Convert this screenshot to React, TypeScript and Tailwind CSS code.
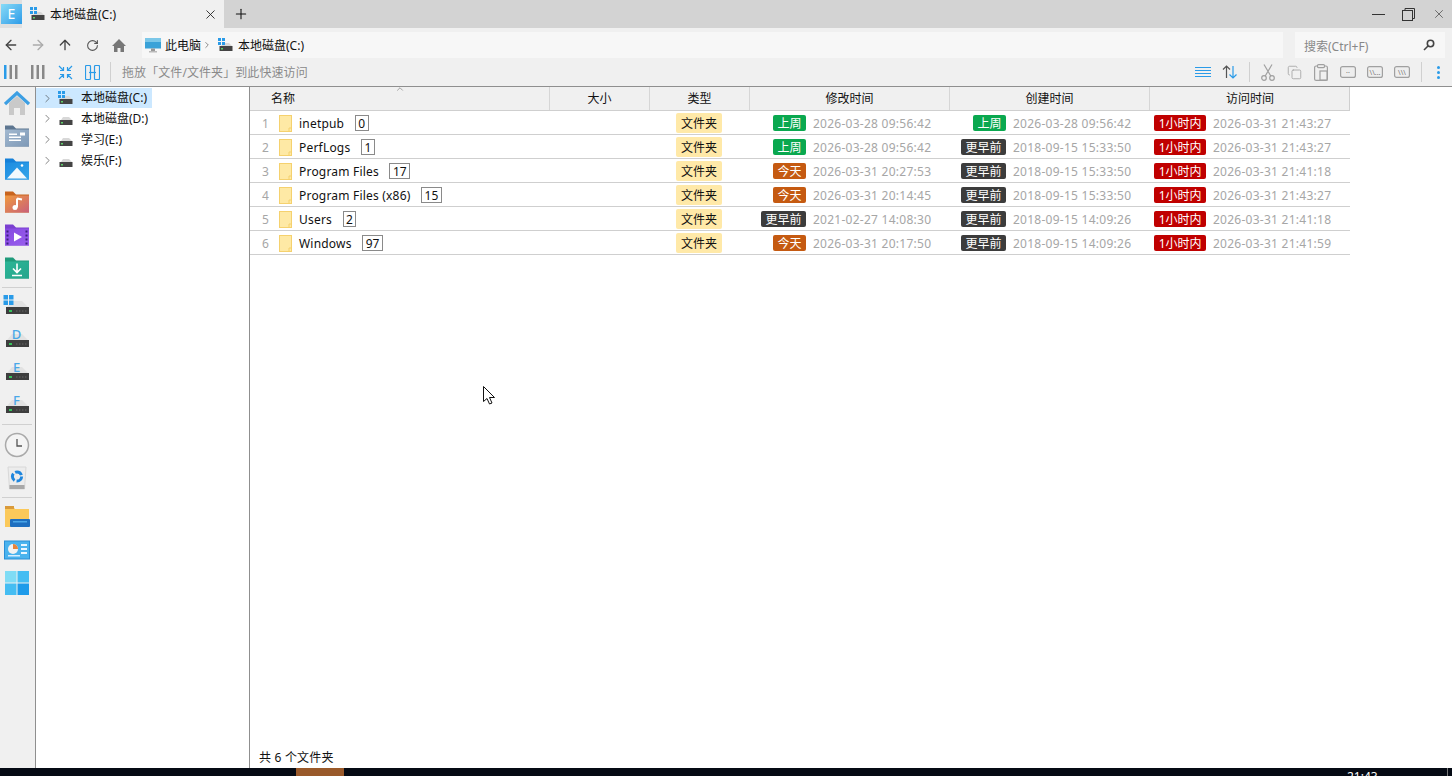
import { ArrowLeft, ArrowRight, ArrowUp, ChevronRight, ChevronUp, Copy, Plus, RotateCw, X } from 'lucide-react';

const FONT = 'font-["Noto_Sans","Noto_Sans_CJK_SC",sans-serif]';

type Tag = 'week' | 'today' | 'old' | 'hour';

const tagStyle: Record<Tag, { label: string; color: string }> = {
    week: { label: '上周', color: 'bg-[#0aa84f]' },
    today: { label: '今天', color: 'bg-[#c55a11]' },
    old: { label: '更早前', color: 'bg-[#3c3c3c]' },
    hour: { label: '1小时内', color: 'bg-[#c00000]' },
};

const rows: { name: string; count: string; cells: [Tag, string][] }[] = [
    { name: 'inetpub', count: '0', cells: [['week', '2026-03-28 09:56:42'], ['week', '2026-03-28 09:56:42'], ['hour', '2026-03-31 21:43:27']] },
    { name: 'PerfLogs', count: '1', cells: [['week', '2026-03-28 09:56:42'], ['old', '2018-09-15 15:33:50'], ['hour', '2026-03-31 21:43:27']] },
    { name: 'Program Files', count: '17', cells: [['today', '2026-03-31 20:27:53'], ['old', '2018-09-15 15:33:50'], ['hour', '2026-03-31 21:41:18']] },
    { name: 'Program Files (x86)', count: '15', cells: [['today', '2026-03-31 20:14:45'], ['old', '2018-09-15 15:33:50'], ['hour', '2026-03-31 21:43:27']] },
    { name: 'Users', count: '2', cells: [['old', '2021-02-27 14:08:30'], ['old', '2018-09-15 14:09:26'], ['hour', '2026-03-31 21:41:18']] },
    { name: 'Windows', count: '97', cells: [['today', '2026-03-31 20:17:50'], ['old', '2018-09-15 14:09:26'], ['hour', '2026-03-31 21:41:59']] },
];

const columns = ['名称', '大小', '类型', '修改时间', '创建时间', '访问时间'];
const tree = ['本地磁盘(C:)', '本地磁盘(D:)', '学习(E:)', '娱乐(F:)'];

const WinLogo = ({ x, y, s }: { x: number; y: number; s: number }) => (
    <g fill="#2a9be8">
        <rect x={x} y={y} width={s} height={s} />
        <rect x={x + s + 1} y={y} width={s} height={s} />
        <rect x={x} y={y + s + 1} width={s} height={s} />
        <rect x={x + s + 1} y={y + s + 1} width={s} height={s} />
    </g>
);

const SmallDrive = ({ win }: { win?: boolean }) => (
    <svg width="16" height="14" viewBox="0 0 16 14">
        <path d="M3 8 L5 5 H11 L14 8 Z" fill="#d8d8d8" />
        <rect x="1.5" y="8" width="13" height="5" fill="#444" />
        <rect x="3" y="10" width="2" height="1.5" fill="#5fd06a" />
        {win && <WinLogo x={0} y={0} s={3} />}
    </svg>
);

const RailDrive = ({ letter, win }: { letter?: string; win?: boolean }) => (
    <svg width="28" height="28" viewBox="0 0 28 28">
        <path d="M4 15 L9 9 H19 L25 15 Z" fill="#e2e2e2" />
        <rect x="3" y="15" width="23" height="7" fill="#3e3e3e" />
        <rect x="6" y="18" width="3" height="2" fill="#35c25a" />
        {[13, 16, 19, 22].map((x) => <rect key={x} x={x} y="18.5" width="1.5" height="1" fill="#666" />)}
        {win && <WinLogo x={0.5} y={3} s={4.5} />}
        {letter && <text x="13.5" y="14" textAnchor="middle" fontSize="13" fontWeight="500" fill="#4aa8e8" fontFamily="Noto Sans">{letter}</text>}
    </svg>
);

const RailFolder = ({ id, tab, from, to, children }: { id: string; tab: string; from: string; to: string; children?: React.ReactNode }) => (
    <svg width="26" height="24" viewBox="0 1.5 26 24">
        <defs>
            <linearGradient id={id} x1="0" y1="0" x2="1" y2="1">
                <stop offset="0" stopColor={from} />
                <stop offset="1" stopColor={to} />
            </linearGradient>
        </defs>
        <path d="M1 2 H9 L12 5 H25 V23 H1 Z" fill={tab} />
        <rect x="1" y="6" width="24" height="17" fill={`url(#${id})`} />
        {children}
    </svg>
);

const HomeBig = () => (
    <svg width="26" height="26" viewBox="0 0 26 26">
        <path d="M5 12 V24 H10 V17 H16 V24 H21 V12 L13 5 Z" fill="#c9c9c9" />
        <path d="M1 13 L13 2 L25 13" fill="none" stroke="#3d9fe3" strokeWidth="3.2" />
    </svg>
);

const ClockIcon = () => (
    <svg width="26" height="26" viewBox="0 0 26 26">
        <circle cx="13" cy="13" r="11.5" fill="#f4f4f4" stroke="#a9a9a9" strokeWidth="1.5" />
        <path d="M13 7 V14 H18" fill="none" stroke="#555" strokeWidth="1.3" />
    </svg>
);

const RecycleIcon = () => (
    <svg width="22" height="26" viewBox="0 0 22 26">
        <path d="M2 2 H20 L18.5 24 H3.5 Z" fill="#ececec" stroke="#d8d8d8" />
        <rect x="3.5" y="20" width="15" height="4" fill="#a8a8a8" />
        <circle cx="11" cy="11.5" r="4.6" fill="none" stroke="#1f86dd" strokeWidth="3" strokeDasharray="7.5 2.1" />
    </svg>
);

const ExplorerIcon = () => (
    <svg width="26" height="24" viewBox="0 0 26 24">
        <path d="M1 1 H9 L11 4 H25 V22 H1 Z" fill="#fbc95a" />
        <rect x="1" y="1" width="9" height="3" fill="#d99a3a" />
        <rect x="6" y="14" width="20" height="8" rx="1" fill="#1e6fc0" />
        <rect x="9" y="16" width="14" height="1.5" fill="#4aa6e8" />
    </svg>
);

const PanelIcon = () => (
    <svg width="26" height="20" viewBox="0 0 26 20">
        <rect x="0.5" y="1" width="25" height="18" fill="#4ab3ee" stroke="#2a8fd6" />
        <circle cx="9" cy="9" r="5" fill="#f2f2f2" />
        <path d="M9 9 V4 A5 5 0 0 1 14 9 Z" fill="#e8843a" />
        <rect x="17" y="4" width="6" height="2" fill="#eaf6ff" />
        <rect x="17" y="8" width="6" height="2" fill="#eaf6ff" />
        <rect x="17" y="12" width="6" height="2" fill="#eaf6ff" />
        <rect x="4" y="15" width="12" height="1.5" fill="#d5eeff" />
    </svg>
);

const WindowsIcon = () => (
    <svg width="24" height="24" viewBox="0 0 24 24">
        <rect x="0" y="0" width="11.5" height="11.5" fill="#7fdcf5" />
        <rect x="12.5" y="0" width="11.5" height="11.5" fill="#45bdf2" />
        <rect x="0" y="12.5" width="11.5" height="11.5" fill="#45bdf2" />
        <rect x="12.5" y="12.5" width="11.5" height="11.5" fill="#1e9bea" />
    </svg>
);

const railTop = [
    <HomeBig />,
    <RailFolder id="f-docs" tab="#5d7690" from="#a3b9d0" to="#7d98b6"><rect x="5" y="10" width="8" height="1.5" fill="#fff" /><rect x="5" y="13" width="12" height="1.5" fill="#fff" /><rect x="5" y="16" width="12" height="1.5" fill="#fff" /><rect x="16" y="9" width="5" height="3" fill="#fff" /></RailFolder>,
    <RailFolder id="f-pics" tab="#1580d8" from="#1c8be0" to="#35a5ea"><path d="M3 22 L13 11 L23 22 Z" fill="#f2f8fd" /><circle cx="18" cy="9" r="1.3" fill="#fff" /></RailFolder>,
    <RailFolder id="f-music" tab="#c8641e" from="#f09a3e" to="#c9607a"><path d="M13 9 V18 M13 9 L18 10" stroke="#fff" strokeWidth="2" fill="none" /><circle cx="11" cy="18" r="2.5" fill="#fff" /></RailFolder>,
    <RailFolder id="f-video" tab="#7a3fd0" from="#8548e0" to="#9a60ee"><path d="M10 10 L18 14.5 L10 19 Z" fill="#fff" />{[8, 12, 16, 20].map((y) => <rect key={y} x="2.5" y={y} width="2" height="2" fill="#3d1f80" />)}{[8, 12, 16, 20].map((y) => <rect key={y} x="21.5" y={y} width="2" height="2" fill="#3d1f80" />)}</RailFolder>,
    <RailFolder id="f-down" tab="#1f9a7a" from="#2bb596" to="#25a58c"><path d="M13 8 V17 M9 13 L13 17 L17 13 M8 20 H18" stroke="#fff" strokeWidth="1.6" fill="none" /></RailFolder>,
];

const railBottom = [<ClockIcon />, <RecycleIcon />];
const railApps = [<ExplorerIcon />, <PanelIcon />, <WindowsIcon />];

const RailItem = ({ children }: { children: React.ReactNode }) => (
    <div className="h-[33px] flex items-center justify-center">{children}</div>
);

const RailSep = ({ className }: { className: string }) => (
    <div className={`${className} flex items-center px-[2px]`}><div className="h-px w-full bg-[#d0d0d0]" /></div>
);

const Bars = ({ color }: { color: string }) => (
    <svg width="14" height="14" viewBox="0 0 14 14" fill="#888">
        <rect x="0" y="0" width="2.5" height="14" fill={color} /><rect x="5.5" y="0" width="2.5" height="14" /><rect x="11" y="0" width="2.5" height="14" />
    </svg>
);

const Collapse = () => (
    <svg width="15" height="15" viewBox="0 0 15 15" fill="none" stroke="#2a9be8" strokeWidth="1.2">
        <path d="M1 1 L5.5 5.5 M5.5 2 V5.5 H2 M14 1 L9.5 5.5 M9.5 2 V5.5 H13 M1 14 L5.5 9.5 M5.5 13 V9.5 H2 M14 14 L9.5 9.5 M9.5 13 V9.5 H13" />
    </svg>
);

const Expand = () => (
    <svg width="15" height="15" viewBox="0 0 15 15" fill="none" stroke="#2a9be8" strokeWidth="1.2">
        <rect x="0.5" y="0.5" width="5" height="14" rx="1" /><rect x="9.5" y="0.5" width="5" height="14" rx="1" />
        <path d="M4 7.5 H11" />
    </svg>
);

const ListLines = () => (
    <svg width="16" height="12" viewBox="0 0 16 12" stroke="#2a9be8"><path d="M0 1.5 H16 M0 4.5 H16 M0 7.5 H16 M0 10.5 H16" /></svg>
);

const SortIcon = () => (
    <svg width="16" height="14" viewBox="0 0 16 14" fill="none" strokeWidth="1.2">
        <path d="M4.5 13 V1 M1 4.5 L4.5 1 L8 4.5" stroke="#555" />
        <path d="M11 1 V13 M7.5 9.5 L11 13 L14.5 9.5" stroke="#2a9be8" />
    </svg>
);

const ScissorsIcon = () => (
    <svg width="14" height="17" viewBox="0 0 14 17" fill="none" stroke="#a0a0a0" strokeWidth="1.2">
        <circle cx="3" cy="14" r="2.3" /><circle cx="11" cy="14" r="2.3" />
        <path d="M4.2 12 L11 0.5 M9.8 12 L3 0.5" />
    </svg>
);

const PasteIcon = () => (
    <svg width="14" height="17" viewBox="0 0 14 17" fill="none" stroke="#a0a0a0" strokeWidth="1.2">
        <rect x="0.6" y="2" width="12.8" height="14.4" rx="1.5" /><rect x="3.5" y="0.6" width="7" height="3" rx="1" fill="#f0f0f0" /><rect x="6" y="7" width="7" height="9" fill="#f0f0f0" />
    </svg>
);

const NameBox = ({ text }: { text: string }) => (
    <svg width="16" height="12" viewBox="0 0 16 12">
        <rect x="0.6" y="0.6" width="14.8" height="10.8" rx="2" fill="#eee" stroke="#a0a0a0" strokeWidth="1.2" />
        <text x="8" y="8.5" textAnchor="middle" fontSize="7" fill="#777" fontFamily="Noto Sans">{text}</text>
    </svg>
);

const FileFolder = () => (
    <svg width="13" height="17" viewBox="0 0 13 17">
        <rect x="0.5" y="0.5" width="12" height="16" fill="#fee9a5" stroke="#f5d16e" />
        <path d="M10 16.5 V13 H12.5" fill="none" stroke="#f5d16e" />
    </svg>
);

const PcIcon = () => (
    <svg width="16" height="15" viewBox="0 0 16 15">
        <rect x="0" y="0" width="16" height="10.5" fill="#3aa2d8" />
        <rect x="0" y="0" width="16" height="4" fill="#7bc7e8" />
        <rect x="6" y="10.5" width="4" height="2.5" fill="#999" />
        <rect x="4" y="13" width="8" height="1.5" fill="#bbb" />
    </svg>
);

const TimeCell = ({ tag, time }: { tag: Tag; time: string }) => (
    <div className="flex items-center">
        <div className="w-[56px] flex justify-end">
            <span className={`${tagStyle[tag].color} text-white rounded-[2px] h-4 leading-4 pt-px px-[4.5px] whitespace-nowrap`}>{tagStyle[tag].label}</span>
        </div>
        <span className="ml-[7px] pt-[2px] text-[#a6a6a6] whitespace-nowrap tracking-[0.26px]">{time}</span>
    </div>
);

export default function App() {
    return (
        <div className={`${FONT} w-[1452px] h-[776px] overflow-hidden flex flex-col bg-white text-xs text-[#111] relative`}>
            {/* title bar */}
            <div className="h-7 bg-[#d3d3d3] flex items-center shrink-0">
                <div className="w-[22px] h-7 bg-[#e0e0e0] flex items-center justify-end">
                    <div className="w-[21px] h-5 bg-gradient-to-br from-[#86dbf6] to-[#2a9be8] text-white flex items-center justify-center text-sm">E</div>
                </div>
                <div className="w-[202px] h-7 bg-[#f0f0f0] flex items-center pl-2 pr-[6px]">
                    <SmallDrive win />
                    <span className="ml-1 pt-[2px]">本地磁盘(C:)</span>
                    <X className="ml-auto" size={15} strokeWidth={1.4} color="#222" />
                </div>
                <Plus className="ml-[9px]" size={16} strokeWidth={1.6} color="#111" />
                <div className="ml-auto flex items-center gap-[17px] pr-[6px] text-[#333]">
                    <div className="w-[13px] h-px bg-[#333]" />
                    <svg width="13" height="13" viewBox="0 0 13 13" fill="none" stroke="#333"><rect x="0.5" y="2.5" width="10" height="10" /><path d="M3 2.5 V0.5 H12.5 V10.5 H10.5" /></svg>
                    <X size={14} strokeWidth={1.1} color="#333" />
                </div>
            </div>

            {/* nav bar */}
            <div className="h-[30px] pt-1 bg-[#f0f0f0] flex items-center shrink-0 pl-[3px]">
                <div className="flex items-center gap-[11px] text-[#555]">
                    <ArrowLeft size={16} color="#444" />
                    <ArrowRight size={16} color="#aaa" />
                    <ArrowUp size={16} color="#444" />
                    <RotateCw size={13} color="#555" className="mx-[1.5px]" />
                    <svg width="14" height="13" viewBox="0 0 14 13" fill="#777" className="mx-[1px]"><path d="M7 0 L14 7 H12 V13 H8.5 V9 H5.5 V13 H2 V7 H0 Z" /></svg>
                </div>
                <div className="ml-[15px] w-[1141px] h-[26px] bg-[#f7f7f7] flex items-center pl-[3px]">
                    <PcIcon />
                    <span className="ml-1 pt-[2px]">此电脑</span>
                    <ChevronRight size={10} color="#777" className="ml-[1px]" />
                    <span className="ml-[6px]"><SmallDrive win /></span>
                    <span className="ml-1 pt-[2px]">本地磁盘(C:)</span>
                </div>
                <div className="ml-3 w-[150px] h-[26px] bg-[#f7f7f7] flex items-center justify-between pl-[9px] pr-[10px] text-[#888]">
                    <span className="pt-[3px]">搜索(Ctrl+F)</span>
                    <svg width="12" height="12" viewBox="0 0 12 12" fill="none" stroke="#444" strokeWidth="1.6"><circle cx="7.5" cy="4.5" r="3.2" /><path d="M5 7 L1 11" /></svg>
                </div>
            </div>

            {/* tool bar */}
            <div className="h-[29px] bg-[#f0f0f0] border-b border-[#8f8f8f] flex items-center shrink-0 pl-[4px]">
                <Bars color="#2a9be8" />
                <div className="ml-[13px]"><Bars color="#888" /></div>
                <div className="ml-[13px]"><Collapse /></div>
                <div className="ml-[12px]"><Expand /></div>
                <div className="ml-[10px] w-px h-[20px] bg-[#d0d0d0]" />
                <span className="ml-[11px] pt-[2px] text-[#8a8a8a] tracking-[0.08px]">拖放「文件/文件夹」到此快速访问</span>
                <div className="ml-auto flex items-center">
                    <ListLines />
                    <div className="ml-[11px]"><SortIcon /></div>
                    <div className="ml-[11px] w-px h-[20px] bg-[#d0d0d0]" />
                    <div className="ml-[11px]"><ScissorsIcon /></div>
                    <Copy className="ml-[12px]" size={15} color="#a0a0a0" strokeWidth={1.3} />
                    <div className="ml-[12px]"><PasteIcon /></div>
                    <div className="ml-[12px]"><NameBox text="··" /></div>
                    <div className="ml-[11px]"><NameBox text="\\..." /></div>
                    <div className="ml-[11px]"><NameBox text="\\\" /></div>
                    <div className="ml-[11px] w-px h-[20px] bg-[#d0d0d0]" />
                    <svg className="ml-[15px] mr-[12px]" width="3" height="13" viewBox="0 0 3 13" fill="#2a9be8"><circle cx="1.5" cy="1.5" r="1.5" /><circle cx="1.5" cy="6.5" r="1.5" /><circle cx="1.5" cy="11.5" r="1.5" /></svg>
                </div>
            </div>

            <div className="flex flex-1 min-h-0">
                {/* icon rail */}
                <div className="w-9 shrink-0 bg-[#f0f0f0] border-r border-[#8f8f8f] pr-px flex flex-col">
                    {railTop.map((icon, i) => <RailItem key={i}>{icon}</RailItem>)}
                    <RailSep className="h-[4px]" />
                    <RailItem><RailDrive win /></RailItem>
                    <RailItem><RailDrive letter="D" /></RailItem>
                    <RailItem><RailDrive letter="E" /></RailItem>
                    <RailItem><RailDrive letter="F" /></RailItem>
                    <RailSep className="h-[7px]" />
                    {railBottom.map((icon, i) => <RailItem key={i}>{icon}</RailItem>)}
                    <RailSep className="h-[6px]" />
                    {railApps.map((icon, i) => <RailItem key={i}>{icon}</RailItem>)}
                </div>

                {/* tree */}
                <div className="w-[214px] shrink-0 border-r border-[#8f8f8f] pt-px">
                    {tree.map((label, i) => (
                        <div key={label} className={`w-[116px] flex items-center pl-[5px] ${i === 0 ? 'h-5 bg-[#cce8ff]' : 'h-[21px]'}`}>
                            <ChevronRight size={13} strokeWidth={1.1} color="#333" />
                            <span className="ml-[4px]"><SmallDrive win={i === 0} /></span>
                            <span className="ml-[7px] whitespace-nowrap">{label}</span>
                        </div>
                    ))}
                </div>

                {/* file list */}
                <div className="flex-1 flex flex-col min-w-0">
                    <div className="w-[1100px] grid grid-cols-[300px_100px_100px_200px_200px_200px] h-6 bg-[#f0f0f0] border-b border-r border-[#cfcfcf] relative">
                        {columns.map((col, i) => (
                            <div key={col} className={`flex items-center ${i === 0 ? 'pl-[21px]' : 'justify-center'} ${i < 5 ? 'border-r border-[#d6d6d6]' : ''}`}>{col}</div>
                        ))}
                        <ChevronUp className="absolute left-[145px] -top-[3px]" size={10} color="#555" strokeWidth={1.2} />
                    </div>
                    {rows.map((row, i) => (
                        <div key={row.name} className="w-[1100px] h-6 pt-px grid grid-cols-[300px_100px_100px_200px_200px_200px] border-b border-[#cfcfcf] items-center">
                            <div className="flex items-center">
                                <span className="w-[29px] pl-[12px] pt-[2px] text-[#a6a6a6]">{i + 1}</span>
                                <FileFolder />
                                <span className="ml-[7px] pt-[2px] whitespace-nowrap tracking-[0.2px]">{row.name}</span>
                                <span className="ml-[10.5px] border border-[#8a8a8a] h-4 pt-px leading-[14px] px-[2.5px]">{row.count}</span>
                            </div>
                            <div />
                            <div className="flex justify-center pr-[2px]"><span className="bg-[#ffe9a8] rounded-[2px] h-5 leading-5 pt-px w-[46px] text-center">文件夹</span></div>
                            {row.cells.map(([tag, time], j) => <TimeCell key={j} tag={tag} time={time} />)}
                        </div>
                    ))}
                    <div className="mt-auto h-5 flex items-center pl-[9px] tracking-[0.2px]">共 6 个文件夹</div>
                </div>
            </div>

            {/* taskbar strip */}
            <div className="h-2 bg-[#050a14] shrink-0 relative overflow-hidden">
                <div className="w-12 h-2 bg-[#99592a] ml-[296px]" />
                <span className="absolute left-[1347px] top-[1px] text-white leading-4">21:43</span>
                <div className="absolute left-[1447px] top-0 w-px h-2 bg-[#777]" />
            </div>

            {/* mouse cursor */}
            <svg className="absolute left-[483px] top-[386px]" width="13" height="19" viewBox="0 0 13 19">
                <path d="M0.5 0.5 V15.5 L4 12.5 L6.5 18 L9 17 L6.5 11.5 H11.5 Z" fill="#fff" stroke="#111" />
            </svg>
        </div>
    );
}
